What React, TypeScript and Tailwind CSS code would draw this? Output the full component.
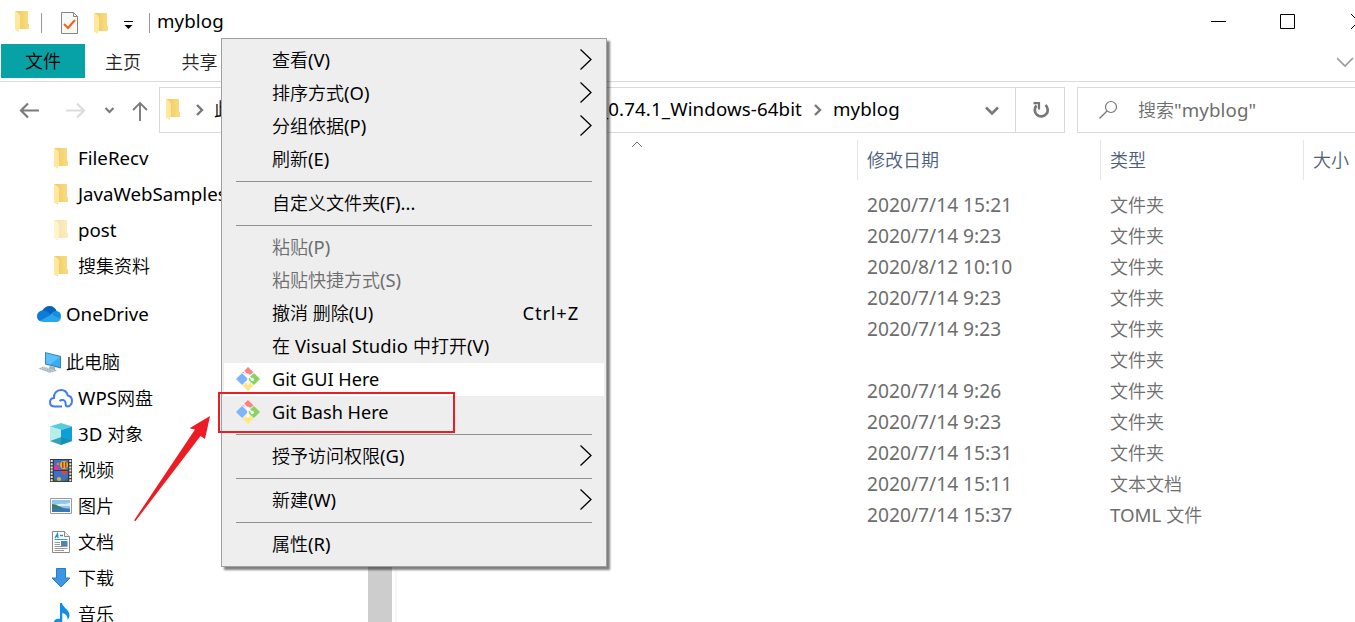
import React from "react";

function Folder({ pale = false }: { pale?: boolean }) {
  return (
    <svg width="14" height="21" viewBox="0 0 14 21" className={pale ? "shrink-0 opacity-50" : "shrink-0"}>
      <defs>
        <linearGradient id="fold" x1="0" x2="1" y1="0" y2="0">
          <stop offset="0" stopColor="#edc966" />
          <stop offset="1" stopColor="#fbdc7d" />
        </linearGradient>
      </defs>
      <path d="M0 0H13V13H14V18H4V3Z" fill="url(#fold)" />
      <path d="M0 0L4.500 3.500C5 4 5 4.500 5 5V17L4 18V21L0 18.500Z" fill="#ffe79b" />
    </svg>
  );
}

type Kind = "wide" | "path" | "menu" | "git" | "vs" | "date" | "key";
const latin: Record<Kind, string> = {
  wide: "font-normal text-[18.7px]",
  path: "font-normal text-[18.7px] tracking-[0.12px]",
  menu: "font-normal text-[18.4px]",
  git: "font-normal text-[18.1px]",
  vs: "font-normal text-[18.4px] tracking-[0.15px]",
  date: "font-normal text-[19.2px]",
  key: "font-normal text-[18.4px] tracking-[0.8px]",
};

function T({ children, kind = "wide" }: { children: string; kind?: Kind }) {
  const parts = children.split(/([\u4e00-\u9fff]+)/).filter(Boolean);
  return (
    <span className="whitespace-pre">
      {parts.map((p, i) =>
        /[\u4e00-\u9fff]/.test(p) ? <span key={i}>{p}</span> : <span key={i} className={latin[kind]}>{p}</span>
      )}
    </span>
  );
}

function OneDrive() {
  return (
    <svg width="24" height="16" viewBox="0 0 24 16">
      <path d="M5 5C7 1.500 9.500 0 12.500 0C16 0 18.500 2 19.700 5L13 9Z" fill="#0563b8" />
      <path d="M0 10.500C0 7 2.500 4.500 6 4.500C9 4 12 7 15 9L4 15.500C1.500 15 0 13 0 10.500Z" fill="#0d7bd8" />
      <path d="M14 8C16 5 18 5 20 5C22.500 5.500 24 7.500 24 10C24 12.500 23 14 22 14.500Z" fill="#158fdf" />
      <path d="M3 14.800L14.500 8.500L23.500 13C23 15 21.500 16 19.500 16H6C5 16 4 15.500 3 14.800Z" fill="#29a7ea" />
    </svg>
  );
}

function Computer() {
  return (
    <svg width="24" height="22" viewBox="0 0 24 22" className="translate-x-px translate-y-px">
      <path d="M7 0L23 4V16.500L7 12.500Z" fill="#3d84b4" />
      <path d="M8 1.300L22 5V15L8 11.500Z" fill="#36adf5" />
      <path d="M8 1.300L22 5L12 12.500L8 11.500Z" fill="#5ec0fa" />
      <path d="M12 14L17 15.300V17.500L19 19L14 20L10 17Z" fill="#a7b1b9" />
      <path d="M0 16.500L6 14.500L17 18.500L12 21Z" fill="#c6cdd3" />
      <path d="M2 16.500L13 20M4 15.500L15 19.300" stroke="#8f9ba5" strokeWidth="0.7" strokeDasharray="1.500 1" />
    </svg>
  );
}

function Wps() {
  return (
    <svg width="24" height="19" viewBox="0 0 24 19" fill="none" stroke="#3f7df0" strokeWidth="2">
      <path d="M13 17.500H6C2.800 17.500 1 15.800 1 13.200C1 10.800 2.500 9.300 5 9C4.500 4.500 7.500 1 12 1C15.500 1 18 3.200 18.700 6.500C21.500 7 23 9.200 23 12C23 15.200 20.800 17.500 18.500 17.500C16 17.500 16.800 15 16.500 13.500C16 11 13 10 10.500 12" />
    </svg>
  );
}

function Cube() {
  return (
    <svg width="22" height="22" viewBox="0 0 22 22">
      <path d="M11 0L22 3.500L11 7L0 3.500Z" fill="#57cbdc" />
      <path d="M0 3.500L11 7V22L0 18Z" fill="#8fdfe2" />
      <path d="M22 3.500L11 7V22L22 18Z" fill="#0f9ed5" />
      <path d="M0 18L11 14L22 18L11 22Z" fill="#158ea8" opacity="0.75" />
      <path d="M0 3.500L11 7V14L0 18Z" fill="#c8f4f0" opacity="0.7" />
    </svg>
  );
}

function Film() {
  return (
    <svg width="22" height="23" viewBox="0 0 22 23">
      <path d="M0 0H22V23H0Z" fill="#3b3b3b" />
      <path d="M1.700 1V23M20.300 1V23" stroke="#e5e5e5" strokeWidth="2" strokeDasharray="2 1.200" />
      <path d="M4 1H18V11H4ZM4 12H18V22H4Z" fill="#3b6fd0" />
      <path d="M4 6L9 8L11 11H4Z" fill="#d33aa5" />
      <circle cx="14" cy="6" r="4" fill="#e5b623" />
      <path d="M12 3H13.500V9H12ZM15 3H16.500V9H15Z" fill="#b6461e" />
      <circle cx="8" cy="5" r="1.500" fill="#e8832a" />
      <path d="M11 12H18L15 16H13Z" fill="#dd4a27" />
      <circle cx="9" cy="20" r="2" fill="#e5b623" />
      <path d="M4 19L7 22H4ZM14 22L18 18V22Z" fill="#2d7d32" />
    </svg>
  );
}

function Picture() {
  return (
    <svg width="22" height="16" viewBox="0 0 22 16">
      <path d="M0.500 0.500H21.500V15.500H0.500Z" fill="#fff" stroke="#9a9a9a" />
      <path d="M2 2H20V14H2Z" fill="#8ec5ee" />
      <path d="M2 7C7 7 9 5 14 6L20 5V8H2Z" fill="#d8eefa" />
      <path d="M2 6C6 6 9 9 17 11H2Z" fill="#3c7c62" />
      <path d="M2 10.500H20V14H2Z" fill="#3a78b5" />
    </svg>
  );
}

function Doc() {
  return (
    <svg width="18" height="22" viewBox="0 0 18 22" fill="none">
      <path d="M0.500 0.500H12.500L17.500 5.500V21.500H0.500Z" fill="#fff" stroke="#8a8a8a" />
      <path d="M12.500 0.500V5.500H17.500" fill="#eee" stroke="#8a8a8a" />
      <path d="M3 7L5.500 2.500L6 7M4 5.500H6M8 4.500H11" stroke="#2b8fd0" strokeWidth="1.300" />
      <path d="M2.500 8.500H15.500" stroke="#2b9ae0" />
      <path d="M2.500 11.500H8M2.500 13.500H8M2.500 15.500H15.500M2.500 17.500H15.500M2.500 19.500H12" stroke="#9a9a9a" />
      <path d="M9 10H15.500V15H9Z" fill="#4b84b5" />
    </svg>
  );
}

function Down() {
  return (
    <svg width="20" height="20" viewBox="0 0 20 20">
      <path d="M5.500 0.500H14.500V10H19L10 19L1 10H5.500Z" fill="#3c96e6" stroke="#2c79c4" />
    </svg>
  );
}

function Music() {
  return (
    <svg width="18" height="22" viewBox="0 0 18 22" className="translate-x-px">
      <path d="M7 0H9C9.500 4 16.500 7 16.500 12C16.500 14 15.500 16 14.500 17C15 13 12.500 10.500 9.300 10V18C9 21 6.500 22 4.500 22C2 22 1 20.500 1 19C1 16.500 4 15 7 16Z" fill="#0f8fe8" />
    </svg>
  );
}

function Git() {
  return (
    <svg width="24" height="24" viewBox="0 0 24 24">
      <path d="M12 0L17.500 5.500L13 8.500L6.500 5.500Z" fill="#ff8080" />
      <path d="M6 6L12 12L6 18L0 12Z" fill="#80b3ff" />
      <path d="M18 6L24 12L18 18L12.500 13V11Z" fill="#87d461" />
      <path d="M12 13L17.500 18.500L12 24L6.500 18.500Z" fill="#ffe680" />
      <path d="M6.500 3L12 8.500L16.300 12.500M12 8V17" stroke="#fff" strokeWidth="1.300" fill="none" />
      <circle cx="12" cy="8.300" r="1.700" fill="#fff" />
      <circle cx="12" cy="16.200" r="1.700" fill="#fff" />
      <circle cx="16.300" cy="12.500" r="1.700" fill="#fff" />
    </svg>
  );
}

type Side = { label: string; icon: React.ReactNode; root?: boolean };
const groups: Side[][] = [
  [
    { label: "FileRecv", icon: <Folder /> },
    { label: "JavaWebSamples", icon: <Folder /> },
    { label: "post", icon: <Folder pale /> },
    { label: "搜集资料", icon: <Folder /> },
  ],
  [{ label: "OneDrive", icon: <OneDrive />, root: true }],
  [
    { label: "此电脑", icon: <Computer />, root: true },
    { label: "WPS网盘", icon: <Wps /> },
    { label: "3D 对象", icon: <Cube /> },
    { label: "视频", icon: <Film /> },
    { label: "图片", icon: <Picture /> },
    { label: "文档", icon: <Doc /> },
    { label: "下载", icon: <Down /> },
    { label: "音乐", icon: <Music /> },
  ],
];

const files: [string, string][] = [
  ["2020/7/14 15:21", "文件夹"],
  ["2020/7/14 9:23", "文件夹"],
  ["2020/8/12 10:10", "文件夹"],
  ["2020/7/14 9:23", "文件夹"],
  ["2020/7/14 9:23", "文件夹"],
  ["", "文件夹"],
  ["2020/7/14 9:26", "文件夹"],
  ["2020/7/14 9:23", "文件夹"],
  ["2020/7/14 15:31", "文件夹"],
  ["2020/7/14 15:11", "文本文档"],
  ["2020/7/14 15:37", "TOML 文件"],
];

type Item = { t: string; kind?: Kind; sub?: boolean; off?: boolean; hot?: boolean; key?: string };
const menu: Item[][] = [
  [{ t: "查看(V)", sub: true }, { t: "排序方式(O)", sub: true }, { t: "分组依据(P)", sub: true }, { t: "刷新(E)" }],
  [{ t: "自定义文件夹(F)..." }],
  [
    { t: "粘贴(P)", off: true },
    { t: "粘贴快捷方式(S)", off: true },
    { t: "撤消 删除(U)", key: "Ctrl+Z" },
    { t: "在 Visual Studio 中打开(V)", kind: "vs" },
    { t: "Git GUI Here", kind: "git", hot: true },
    { t: "Git Bash Here", kind: "git" },
  ],
  [{ t: "授予访问权限(G)", sub: true }],
  [{ t: "新建(W)", sub: true }],
  [{ t: "属性(R)" }],
];

function ContextMenu() {
  return (
    <div className="absolute left-[221px] top-[38px] h-[529px] w-[386px] border border-[#a0a0a0] bg-[#eeeeee] px-[2px] py-[5px] shadow-[3px_3px_2px_rgba(0,0,0,0.5)]">
      {menu.map((g, i) => (
        <div key={i}>
          {i > 0 && <div className="mx-3 my-[5px] h-px bg-[#919191]" />}
          {g.map((m) => (
            <div
              key={m.t}
              className={`flex h-[33px] items-center pb-[2px] pl-3 pr-[11px] ${m.hot ? "bg-white" : ""} ${m.off ? "text-[#6d6d6d]" : "text-black"}`}
            >
              <div className="w-9 shrink-0">{m.kind === "git" && <Git />}</div>
              <div className="flex-1">
                <T kind={m.kind ?? "menu"}>{m.t}</T>
              </div>
              {m.key && (
                <div className="pr-[14px]">
                  <T kind="key">{m.key}</T>
                </div>
              )}
              {m.sub && (
                <svg width="13" height="22" viewBox="0 0 13 22" fill="none" stroke="#000" strokeWidth="1.300">
                  <path d="M0.500 0.500L11 10.500L0.500 20.500" />
                </svg>
              )}
            </div>
          ))}
        </div>
      ))}
    </div>
  );
}

export default function App() {
  return (
    <div className="relative flex h-[622px] w-full flex-col overflow-hidden bg-white font-['Noto_Sans','Noto_Sans_CJK_SC',sans-serif] text-[18px] font-[350] leading-[24px] text-black">
      <div className="flex h-[44px] shrink-0 items-center">
        <div className="ml-[15px] -mt-[1px]"><Folder /></div>
        <div className="ml-[12px] mt-[2px] h-5 w-px bg-[#9b9b9b]" />
        <svg width="17" height="22" viewBox="0 0 17 22" fill="none" className="ml-[19px] mt-[2px]">
          <path d="M0.500 0.500H12.500L16.500 4.500V21.500H0.500Z" fill="#f8f8f8" stroke="#858585" />
          <path d="M12.500 0.500V4.500H16.500" stroke="#858585" />
          <path d="M3 12L7 16L14 8" stroke="#f4600c" strokeWidth="2" />
        </svg>
        <div className="ml-[16px] mt-[2px]"><Folder /></div>
        <svg width="9" height="9" viewBox="0 0 9 9" className="ml-[16px] mt-[6px]">
          <path d="M0 0.500H9" stroke="#000" />
          <path d="M0.500 4H8.500L4.500 8Z" />
        </svg>
        <div className="ml-[16px] mr-[7px] mt-[2px] h-5 w-px bg-[#9b9b9b]" />
        <div className="-mt-[2px]"><T kind="path">myblog</T></div>
        <div className="flex-1" />
        <svg width="144" height="16" viewBox="0 0 144 16" fill="none" stroke="#000" className="shrink-0">
          <path d="M0 7.500H15M69.500 0.500H83.500V14.500H69.500ZM140 0L155 15M155 0L140 15" />
        </svg>
      </div>
      <div className="flex h-[38px] shrink-0 border-b border-[#dadbdc] pl-px text-[#222]">
        <div className="flex h-[34px] w-[84px] items-center justify-center bg-[#07a2a5] text-black">文件</div>
        <div className="flex h-[36px] w-[76px] items-center justify-center">主页</div>
        <div className="flex h-[36px] w-[77px] items-center justify-center">共享</div>
        <div className="flex-1" />
        <svg width="18" height="36" viewBox="0 0 18 36" fill="none" stroke="#9a9a9a" strokeWidth="1.700">
          <path d="M0 14L8 22L16 14" />
        </svg>
      </div>
      <div className="flex h-[58px] shrink-0 pt-[5px]">
        <svg width="159" height="46" viewBox="0 0 159 46" fill="none" className="shrink-0" strokeWidth="2.200" stroke="#7b7b7b">
          <path d="M39 23.500H21M28 16.500L21 23.500L28 30.500" />
          <path d="M66 23.500H84M77 16.500L84 23.500L77 30.500" stroke="#dcdcdc" />
          <path d="M105.500 21L109.500 25L113.500 21" />
          <path d="M140 34V16M133 23L140 16L147 23" strokeWidth="1.900" />
        </svg>
        <div className="flex h-[46px] w-[906px] shrink-0 items-center border border-[#d9d9d9]">
          <div className="ml-[6px] -mt-[2px]"><Folder /></div>
          <svg width="8" height="12" viewBox="0 0 8 12" fill="none" stroke="#777" strokeWidth="2.400" className="ml-[16px]">
            <path d="M1 1L6 6L1 11" />
          </svg>
          <div className="-mt-[2px] ml-[10px] w-[384px] shrink-0"><T>此电脑</T></div>
          <div className="-mt-[2px] w-[204px] shrink-0 text-right"><T kind="path">_0.74.1_Windows-64bit</T></div>
          <svg width="8" height="12" viewBox="0 0 8 12" fill="none" stroke="#777" strokeWidth="2.400" className="ml-[12px]">
            <path d="M1 1L6 6L1 11" />
          </svg>
          <div className="-mt-[2px] ml-[11px]"><T kind="path">myblog</T></div>
          <div className="flex-1" />
          <svg width="14" height="10" viewBox="0 0 14 10" fill="none" stroke="#777" strokeWidth="2.600" className="mr-[16px] mt-[2px]">
            <path d="M1 1.500L7 7.500L13 1.500" />
          </svg>
          <div className="flex h-full w-[49px] items-center justify-center border-l border-[#d9d9d9] pl-px">
            <svg width="18" height="18" viewBox="0 0 18 18" fill="none" stroke="#777" strokeWidth="2.700">
              <path d="M13.500 4A6.500 6.500 0 1 1 4.500 4.500" />
              <path d="M1.500 2.200H7V8.500" strokeWidth="2.200" />
            </svg>
          </div>
        </div>
        <div className="ml-3 flex h-[46px] w-[300px] shrink-0 items-center border border-[#d9d9d9] text-[#6d6d6d]">
          <svg width="20" height="20" viewBox="0 0 20 20" fill="none" stroke="#767676" strokeWidth="1.200" className="ml-[20px]">
            <circle cx="13" cy="7" r="5.500" />
            <path d="M9 11L1.500 18.500" />
          </svg>
          <div className="ml-[20px]"><T kind="path">搜索"myblog"</T></div>
        </div>
      </div>
      <div className="flex min-h-0 flex-1">
        <div className="w-[368px] shrink-0 overflow-hidden">
          {groups.map((g, i) => (
            <div key={i} className="mb-3">
              {g.map((s) => (
                <div key={s.label} className="flex h-9 items-center">
                  <div className={s.root ? "flex w-[66px] items-center pl-[37px]" : "flex w-[78px] justify-center pl-[43px]"}>{s.icon}</div>
                  <T>{s.label}</T>
                </div>
              ))}
            </div>
          ))}
        </div>
        <div className="w-6 shrink-0 bg-[#cdcdcd]" />
        <div className="ml-[3px] w-[2px] shrink-0 bg-[#f7f7f7]" />
        <div className="flex-1">
          <div className="flex h-10 text-[#4c607a]">
            <div className="flex w-[460px] shrink-0 justify-center pl-[19px] pt-px">
              <svg width="12" height="7" viewBox="0 0 12 7" fill="none" stroke="#6d6d6d">
                <path d="M1 6L6 1L11 6" />
              </svg>
            </div>
            <div className="flex w-[243px] shrink-0 items-center border-l border-[#e5e5e5] pl-[9px]">修改日期</div>
            <div className="flex w-[203px] shrink-0 items-center border-l border-[#e5e5e5] pl-[9px]">类型</div>
            <div className="flex shrink-0 items-center border-l border-[#e5e5e5] pl-[9px]">大小</div>
          </div>
          <div className="pt-[9px] text-[#6d6d6d]">
            {files.map(([d, k], i) => (
              <div key={i} className="flex h-[31px] items-center pl-[470px]">
                <div className="w-[243px] shrink-0"><T kind="date">{d}</T></div>
                <T>{k}</T>
              </div>
            ))}
          </div>
        </div>
      </div>
      <ContextMenu />
      <svg width="340" height="160" viewBox="130 380 340 160" className="absolute left-[130px] top-[380px]">
        <path d="M219 393H454V432H219Z" fill="none" stroke="#ed1c24" strokeWidth="2" />
        <path d="M134 520.500L195 429.500L189.500 428.300L210 416L205 439L200.500 436L135.500 521Z" fill="#ed1c24" />
      </svg>
    </div>
  );
}
